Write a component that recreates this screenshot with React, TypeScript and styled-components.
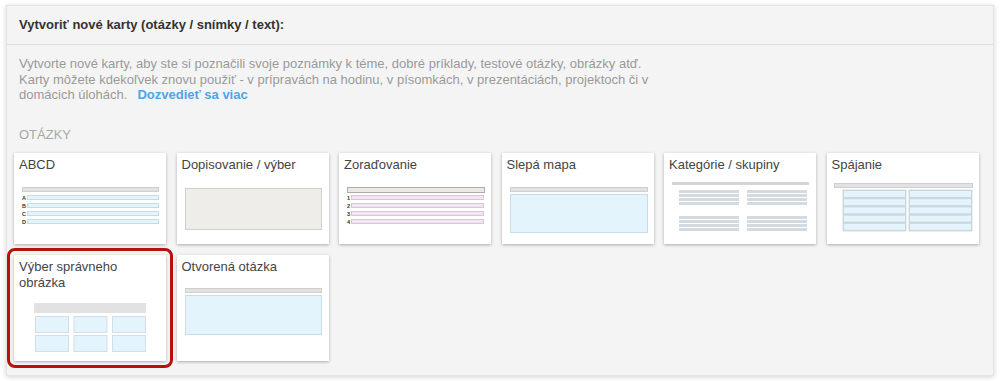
import React, { FC } from "react";
import styled, { createGlobalStyle } from "styled-components";

const GlobalStyle = createGlobalStyle`
  html, body {
    margin: 0;
    padding: 0;
    background: #ffffff;
  }
  body {
    font-family: "Liberation Sans", Arial, sans-serif;
    font-size: 13px;
    color: #333;
  }
`;

const Panel = styled.section`
  margin: 5px 6px;
  width: 988px;
  box-sizing: border-box;
  background: #f4f4f4;
  border: 1px solid #e4e4e4;
  box-shadow: 0 1px 5px rgba(0, 0, 0, 0.18);
`;

const Header = styled.div`
  padding: 11px 12px 11px;
  line-height: 16px;
  font-weight: bold;
  color: #333;
  border-bottom: 1px solid #dcdcdc;
`;

const Body = styled.div`
  padding: 11px 7px 14px;
`;

const Description = styled.p`
  margin: 0 0 0;
  padding: 0 5px;
  line-height: 15.5px;
  color: #9a9a9a;
`;

const MoreLink = styled.a`
  margin-left: 10px;
  color: #4ba6ec;
  font-weight: bold;
  text-decoration: none;
  cursor: pointer;
`;

const SectionLabel = styled.div`
  margin-top: 24px;
  padding: 0 5px;
  line-height: 16px;
  color: #a8a8a8;
  text-transform: uppercase;
`;

const CardGrid = styled.div`
  margin-top: 10px;
  display: grid;
  grid-template-columns: repeat(6, 152px);
  column-gap: 10.5px;
  row-gap: 11px;
`;

const Card = styled.div<{ $selected?: boolean }>`
  display: flex;
  flex-direction: column;
  background: #ffffff;
  box-shadow: 0 1px 3px rgba(0, 0, 0, 0.3);
  cursor: pointer;
  outline: ${(p) => (p.$selected ? "3px solid #b8100f" : "none")};
  outline-offset: 4px;
  border-radius: ${(p) => (p.$selected ? "1px" : "0")};
`;

const CardTitle = styled.div`
  padding: 4px 5px 0;
  min-height: 16px;
  line-height: 16px;
  color: #444;
`;

const Thumb = styled.svg`
  display: block;
  width: 152px;
  flex: none;
`;

const grey = { fill: "#e2e2e2", stroke: "#cfcfcf" };
const blue = { fill: "#e3f4fc", stroke: "#c6dce6" };

const AbcdThumb: FC = () => (
  <Thumb viewBox="0 0 152 71" height={71}>
    <rect x={8.5} y={14.5} width={136} height={4} {...grey} />
    {["A", "B", "C", "D"].map((l, i) => (
      <g key={l}>
        <text x={8} y={26.5 + i * 8} fontSize={5.5} fontWeight="bold" fill="#333">
          {l}
        </text>
        <rect x={13.5} y={22.5 + i * 8} width={131} height={4} {...blue} />
      </g>
    ))}
  </Thumb>
);

const FillThumb: FC = () => (
  <Thumb viewBox="0 0 152 71" height={71}>
    <rect x={8.5} y={15.5} width={136} height={41} fill="#efedea" stroke="#d3d0cc" />
  </Thumb>
);

const OrderThumb: FC = () => (
  <Thumb viewBox="0 0 152 71" height={71}>
    <rect x={8.5} y={14.5} width={137} height={5} fill="#ece8e6" stroke="#b5a9a3" />
    {[1, 2, 3, 4].map((n, i) => (
      <g key={n}>
        <text x={8} y={26.5 + i * 8} fontSize={5.5} fontWeight="bold" fill="#333">
          {n}
        </text>
        <rect x={12.5} y={22.5 + i * 8} width={132} height={4} fill="#f3e6f3" stroke="#d8c6d8" />
      </g>
    ))}
  </Thumb>
);

const MapThumb: FC = () => (
  <Thumb viewBox="0 0 152 71" height={71}>
    <rect x={8.5} y={14.5} width={137} height={4} {...grey} />
    <rect x={8.5} y={21.5} width={137} height={38} {...blue} />
  </Thumb>
);

const CategoryGroup: FC<{ x: number; y: number }> = ({ x, y }) => (
  <g>
    {[0, 1, 2, 3].map((i) => (
      <rect key={i} x={x} y={y + i * 4} width={60} height={3} fill="#d4dbe0" />
    ))}
  </g>
);

const CategoryThumb: FC = () => (
  <Thumb viewBox="0 0 152 71" height={71}>
    <rect x={8} y={9} width={137} height={3} fill="#d5d5d5" />
    <CategoryGroup x={15} y={17} />
    <CategoryGroup x={83} y={17} />
    <CategoryGroup x={15} y={43} />
    <CategoryGroup x={83} y={43} />
  </Thumb>
);

const PairThumb: FC = () => (
  <Thumb viewBox="0 0 152 71" height={71}>
    <rect x={7.5} y={10.5} width={138} height={4} {...grey} />
    {[16, 82].map((x) => (
      <g key={x}>
        <rect x={x - 0.5} y={16.5} width={64} height={42} fill="#d8dcde" />
        {[0, 1, 2, 3, 4].map((i) => (
          <rect
            key={i}
            x={x + 0.5}
            y={17.5 + i * 8.2}
            width={62}
            height={7}
            fill="#e3f4fc"
            stroke="#c9d6dc"
          />
        ))}
      </g>
    ))}
  </Thumb>
);

const ImagePickThumb: FC = () => (
  <Thumb viewBox="0 0 152 70" height={70}>
    <rect x={20} y={12} width={112} height={10} fill="#e2e2e2" />
    {[0, 1].map((r) =>
      [21, 59.5, 98].map((x) => (
        <rect
          key={`${r}-${x}`}
          x={x + 0.5}
          y={25.5 + r * 19}
          width={33}
          height={16}
          fill="#e3f4fc"
          stroke="#cfe0ea"
        />
      ))
    )}
  </Thumb>
);

const OpenThumb: FC = () => (
  <Thumb viewBox="0 0 152 70" height={70}>
    <rect x={8.5} y={13.5} width={136} height={4} {...grey} />
    <rect x={8.5} y={20.5} width={136} height={39} {...blue} />
  </Thumb>
);

interface CardType {
  title: string;
  thumb: FC;
  selected?: boolean;
}

const cardTypes: CardType[] = [
  { title: "ABCD", thumb: AbcdThumb },
  { title: "Dopisovanie / výber", thumb: FillThumb },
  { title: "Zoraďovanie", thumb: OrderThumb },
  { title: "Slepá mapa", thumb: MapThumb },
  { title: "Kategórie / skupiny", thumb: CategoryThumb },
  { title: "Spájanie", thumb: PairThumb },
  { title: "Výber správneho obrázka", thumb: ImagePickThumb, selected: true },
  { title: "Otvorená otázka", thumb: OpenThumb }
];

const App: FC = () => {
  return (
    <>
      <GlobalStyle />
      <Panel>
        <Header>Vytvoriť nové karty (otázky / snímky / text):</Header>
        <Body>
          <Description>
            Vytvorte nové karty, aby ste si poznačili svoje poznámky k téme, dobré
            príklady, testové otázky, obrázky atď.
            <br />
            Karty môžete kdekoľvek znovu použiť - v prípravách na hodinu, v
            písomkách, v prezentáciách, projektoch či v
            <br />
            domácich úlohách.
            <MoreLink>Dozvedieť sa viac</MoreLink>
          </Description>
          <SectionLabel>Otázky</SectionLabel>
          <CardGrid>
            {cardTypes.map(({ title, thumb: ThumbPic, selected }) => (
              <Card key={title} $selected={selected}>
                <CardTitle>{title}</CardTitle>
                <ThumbPic />
              </Card>
            ))}
          </CardGrid>
        </Body>
      </Panel>
    </>
  );
};

export default App;
